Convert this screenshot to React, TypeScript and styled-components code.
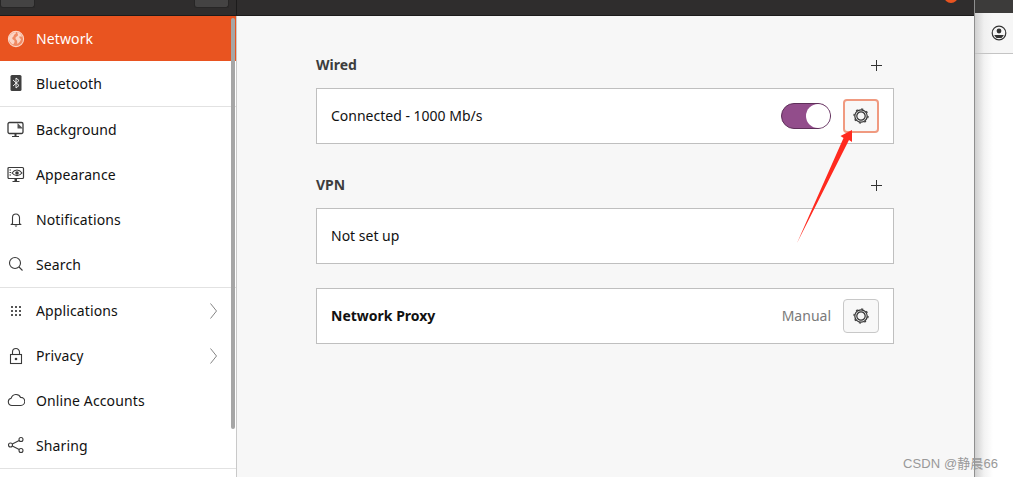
import styled, { createGlobalStyle } from "styled-components";
import type { ReactNode } from "react";

const Global = createGlobalStyle`
  html, body { margin: 0; padding: 0; height: 100%; overflow: hidden; background: #fff; }
  #root { height: 100%; }
  * { box-sizing: border-box; }
`;

const Page = styled.div`
  position: relative;
  display: flex;
  width: 1013px;
  height: 477px;
  overflow: hidden;
  font-family: "Noto Sans", "Liberation Sans", sans-serif;
  font-size: 14px;
  color: #111;
`;

const Window = styled.div`
  flex: 0 0 975px;
  display: flex;
  flex-direction: column;
  border-right: 1px solid #8f8f8f;
`;

const TitleBar = styled.div`
  flex: 0 0 16px;
  display: flex;
  justify-content: space-between;
  overflow: hidden;
  background: #2f2d2d;
  border-bottom: 1px solid #1c1b1b;
  padding-right: 16px;
`;

const SideHead = styled.div`
  width: 237px;
  display: flex;
  justify-content: space-between;
  padding: 0 7px 0 0;
  border-right: 1px solid #1c1b1b;
`;

const HeadButton = styled.div`
  width: 35px;
  height: 8px;
  background: #444343;
  border: 1px solid #272626;
  border-top: none;
  border-radius: 0 0 3px 3px;
`;

const CloseDot = styled.div`
  width: 14px;
  height: 14px;
  margin-top: -11px;
  background: #e95420;
  border-radius: 50%;
`;

const Body = styled.div`
  flex: 1;
  display: flex;
  min-height: 0;
`;

const Sidebar = styled.nav`
  position: relative;
  flex: 0 0 237px;
  background: #fff;
  border-right: 1px solid #c9c9c9;
`;

const ScrollThumb = styled.div`
  position: absolute;
  top: 2px;
  right: 1px;
  width: 4px;
  height: 411px;
  background: #a6a6a6;
  border-radius: 2px;
`;

const Row = styled.div<{ $active?: boolean; $divided?: boolean }>`
  display: flex;
  align-items: center;
  height: ${(p) => (p.$divided ? 46 : 45)}px;
  padding: ${(p) => (p.$divided ? "0 0 1px" : "0")};
  padding-left: 7px;
  gap: 11px;
  background: ${(p) => (p.$active ? "#e95420" : "transparent")};
  color: ${(p) => (p.$active ? "#fff" : "#111")};
  border-bottom: ${(p) => (p.$divided ? "1px solid #e2e2e2" : "none")};
`;

const IconSlot = styled.span`
  flex: 0 0 18px;
  height: 18px;
  display: flex;
  align-items: center;
  justify-content: center;
`;

const Label = styled.span`
  flex: 1;
  letter-spacing: 0.12px;
`;

const Chevron = styled.svg`
  width: 7px;
  height: 16px;
  margin-right: 19px;
`;

const Main = styled.main`
  flex: 1;
  background: #f7f7f7;
  padding: 40px 0 0 79px;
`;

const Column = styled.div`
  width: 578px;
  display: flex;
  flex-direction: column;
`;

const SectionHead = styled.div`
  height: 32px;
  display: flex;
  align-items: flex-start;
  justify-content: space-between;
  font-weight: 700;
  color: #3d3d3d;
  line-height: 18px;
`;

const Plus = styled.svg`
  width: 11px;
  height: 11px;
  margin: 4px 12px 0 0;
`;

const Card = styled.div<{ $gap: number }>`
  height: 56px;
  margin-bottom: ${(p) => p.$gap}px;
  display: flex;
  align-items: center;
  padding: 0 14px;
  background: #fff;
  border: 1px solid #bfbfbf;
`;

const CardText = styled.span<{ $bold?: boolean }>`
  flex: 1;
  padding-bottom: 2px;
  font-weight: ${(p) => (p.$bold ? 700 : 400)};
`;

const Toggle = styled.div`
  position: relative;
  width: 50px;
  height: 26px;
  margin-right: 12px;
  background: #924d8b;
  border: 1px solid #5e2f59;
  border-radius: 13px;
`;

const Knob = styled.div`
  position: absolute;
  top: 0;
  right: 0;
  width: 24px;
  height: 24px;
  background: #fff;
  border-radius: 50%;
`;

const Muted = styled.span`
  margin-right: 12px;
  padding-bottom: 2px;
  color: #7a7a7a;
`;

const GearButton = styled.div<{ $focused?: boolean }>`
  width: 36px;
  height: 34px;
  display: flex;
  align-items: center;
  justify-content: center;
  background: #f8f8f8;
  border: ${(p) => (p.$focused ? "2px solid #f09a80" : "1px solid #c8c8c8")};
  border-radius: 4px;
`;

const SidePeek = styled.div`
  flex: 1;
  display: flex;
  flex-direction: column;
  background: linear-gradient(90deg, #d0d0d0 0, #f2f2f2 9px, #fff 18px);
`;

const PeekTop = styled.div`
  flex: 0 0 13px;
  background: #3c3b3a;
`;

const PeekHead = styled.div`
  height: 41px;
  padding: 12px 0 0 16px;
  border-bottom: 1px solid #c4c4c4;
  background: linear-gradient(90deg, #d0d0d0 0, #f0f0f0 9px, #f6f6f6 18px);
`;

const Arrow = styled.svg`
  position: absolute;
  left: 795px;
  top: 125px;
  width: 60px;
  height: 120px;
`;

const Watermark = styled.div`
  position: absolute;
  left: 903px;
  top: 453px;
  font-family: "Liberation Sans", "Noto Sans CJK SC", sans-serif;
  font-size: 13px;
  letter-spacing: 0.1px;
  color: #999;
  white-space: nowrap;
`;

const stroke = { fill: "none", stroke: "#3a3a3a", strokeWidth: 1.1 };

const Icon = ({ children }: { children: ReactNode }) => (
  <IconSlot>
    <svg width="18" height="18" viewBox="0 0 18 18">
      {children}
    </svg>
  </IconSlot>
);

const Gear = () => (
  <svg width="18" height="18" viewBox="0 0 18 18">
    <circle cx="9" cy="9" r="6.200" fill="none" stroke="#333" strokeWidth="1.200" />
    <circle cx="9" cy="9" r="4.200" fill="none" stroke="#333" strokeWidth="1.200" />
    <circle cx="9" cy="9" r="7" fill="none" stroke="#444" strokeWidth="1.400" strokeDasharray="2 3.500" />
  </svg>
);

const PlusMark = () => (
  <Plus viewBox="0 0 11 11">
    <path d="M5.500 0v11M0 5.500h11" stroke="#333" strokeWidth="1" />
  </Plus>
);

const items: { name: string; icon: ReactNode; active?: boolean; divided?: boolean; more?: boolean }[] = [
  {
    name: "Network",
    active: true,
    icon: (
      <>
        <circle cx="9" cy="9" r="7.600" fill="#f08a63" stroke="#fbd5c6" strokeWidth="1.100" />
        <path
          d="M2 7c1.500-2.500 3.500-4.500 6.500-5 1 1 0 2-1 2.500s-.5 2-1.500 2.500-1 2 0 2.500 2 1 1.500 2.500-1 2.500-1.500 2.500C4 13.500 1.500 10.500 2 7zM10.500 2c2 .5 4 2.500 4.500 4.500-1 .5-2-.5-2.500 0s0 2 1.500 2.500c-.5 2-1.500 3.500-3.500 5-.5-1.500 0-3-1-4s-1.500-2-.5-3 2-1 2-2-1-1.500-.5-3z"
          fill="#fbd5c6"
        />
      </>
    ),
  },
  {
    name: "Bluetooth",
    divided: true,
    icon: (
      <>
        <rect x="3.500" y="1" width="11" height="16" rx="1.500" fill="#3f3f3f" />
        <path d="M6 6l6 5.500L9 14V4l3 2.500L6 12" fill="none" stroke="#fff" strokeWidth="0.900" />
      </>
    ),
  },
  {
    name: "Background",
    icon: (
      <>
        <path d="M2.500 1.500h12a1.500 1.500 0 0 1 1.500 1.500v8a1.500 1.500 0 0 1-1.500 1.500h-12A1.500 1.500 0 0 1 1 11V3a1.500 1.500 0 0 1 1.500-1.500z" fill="none" stroke="#3a3a3a" strokeWidth="1.300" />
        <path d="M10.500 2l5.500 5.500h-5.500z" fill="#555" />
        <path d="M7.500 13h2v2h2.500v1H5v-1h2.500z" fill="#3a3a3a" />
      </>
    ),
  },
  {
    name: "Appearance",
    icon: (
      <>
        <rect x="1" y="1.500" width="15.500" height="11" rx="1" fill="none" stroke="#3a3a3a" strokeWidth="1.200" />
        <path d="M5 7c3-4 7-4 10 0-3 3.500-7 3.500-10 0z" {...stroke} />
        <circle cx="10" cy="7" r="1.800" fill="#3a3a3a" />
        <path d="M2.500 4h1.500M2.500 6.500h1.500M2.500 9h1.500" {...stroke} />
        <path d="M7.500 13h2.500v2h2.500v1h-7v-1h2z" fill="#3a3a3a" />
      </>
    ),
  },
  {
    name: "Notifications",
    icon: (
      <>
        <path d="M5.500 12.500V6.500a3.500 3.500 0 0 1 7 0v6l1 1h-9z" {...stroke} />
        <path d="M7.500 14.500h3L9 16z" fill="#3a3a3a" />
      </>
    ),
  },
  {
    name: "Search",
    divided: true,
    icon: (
      <>
        <circle cx="8" cy="8" r="5.500" {...stroke} />
        <path d="M12 12l3.500 3.500" {...stroke} />
      </>
    ),
  },
  {
    name: "Applications",
    more: true,
    icon: (
      <path
        d="M4 4h2v2H4zM8 4h2v2H8zM12 4h2v2h-2zM4 8h2v2H4zM8 8h2v2H8zM12 8h2v2h-2zM4 12h2v2H4zM8 12h2v2H8zM12 12h2v2h-2z"
        fill="#555"
      />
    ),
  },
  {
    name: "Privacy",
    more: true,
    icon: (
      <>
        <rect x="3.500" y="7.500" width="11" height="9" {...stroke} />
        <path d="M5.500 7.500V5a3.500 3.500 0 0 1 7 0v2.500" {...stroke} />
        <circle cx="9" cy="12" r="1.300" fill="#3a3a3a" />
      </>
    ),
  },
  {
    name: "Online Accounts",
    icon: <path d="M5 13.500a3.700 3.700 0 0 1-.8-7.300 5 5 0 0 1 9.400-.8 3.800 3.800 0 0 1 .2 8.100z" {...stroke} />,
  },
  {
    name: "Sharing",
    divided: true,
    icon: (
      <>
        <circle cx="14" cy="3.500" r="2" {...stroke} />
        <circle cx="3.500" cy="9" r="2" {...stroke} />
        <circle cx="14" cy="14.500" r="2" {...stroke} />
        <path d="M5.300 8l6.900-3.500M5.300 10l6.900 3.500" {...stroke} />
      </>
    ),
  },
];

export default function App() {
  return (
    <Page>
      <Global />
      <Window>
        <TitleBar>
          <SideHead>
            <HeadButton />
            <HeadButton />
          </SideHead>
          <CloseDot />
        </TitleBar>
        <Body>
          <Sidebar>
            {items.map((item) => (
              <Row key={item.name} $active={item.active} $divided={item.divided}>
                <Icon>{item.icon}</Icon>
                <Label>{item.name}</Label>
                {item.more && (
                  <Chevron viewBox="0 0 7 16">
                    <path d="M.5 .5l6 7.500-6 7.500" fill="none" stroke="#666" strokeWidth="0.800" />
                  </Chevron>
                )}
              </Row>
            ))}
            <ScrollThumb />
          </Sidebar>
          <Main>
            <Column>
              <SectionHead>
                Wired
                <PlusMark />
              </SectionHead>
              <Card $gap={32}>
                <CardText>Connected - 1000 Mb/s</CardText>
                <Toggle>
                  <Knob />
                </Toggle>
                <GearButton $focused>
                  <Gear />
                </GearButton>
              </Card>
              <SectionHead>
                VPN
                <PlusMark />
              </SectionHead>
              <Card $gap={24}>
                <CardText>Not set up</CardText>
              </Card>
              <Card $gap={0}>
                <CardText $bold>Network Proxy</CardText>
                <Muted>Manual</Muted>
                <GearButton>
                  <Gear />
                </GearButton>
              </Card>
            </Column>
          </Main>
        </Body>
      </Window>
      <SidePeek>
        <PeekTop />
        <PeekHead>
          <svg width="16" height="16" viewBox="0 0 16 16">
            <circle cx="8" cy="8" r="6.800" fill="none" stroke="#333" strokeWidth="1.200" />
            <circle cx="8" cy="6" r="2.400" fill="#333" />
            <path d="M3.500 10h9v.8l-2 2.200h-5l-2-2.200z" fill="#333" />
          </svg>
        </PeekHead>
      </SidePeek>
      <Arrow viewBox="0 0 60 120">
        <path d="M2 118L48.500 13 45.500 11 57 5 57 17 54 15z" fill="#ff2a1f" />
      </Arrow>
      <Watermark>CSDN @静晨66</Watermark>
    </Page>
  );
}
